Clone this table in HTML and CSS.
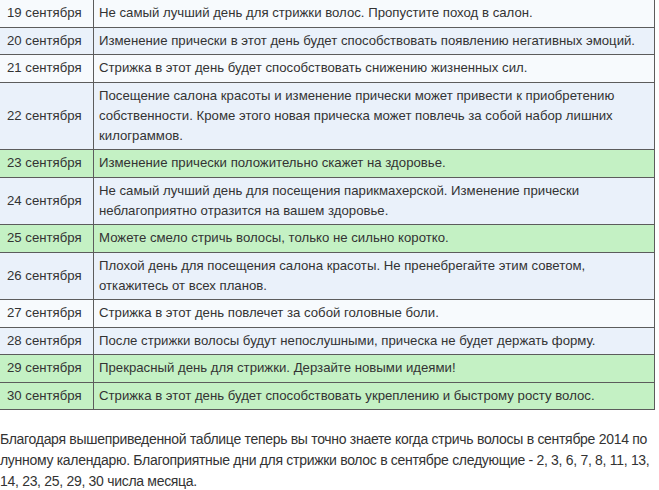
FILE: index.html
```html
<!DOCTYPE html>
<html lang="ru">
<head>
<meta charset="utf-8">
<title>Стрижка волос в сентябре</title>
<link rel="stylesheet" href="styles.css">
</head>
<body>
<div class="page">
<table class="moon">
<colgroup><col class="c-date"><col class="c-text"></colgroup>
<tbody>
<tr class="w"><td>19 сентября</td><td>Не самый лучший день для стрижки волос. Пропустите поход в салон.</td></tr>
<tr class="b"><td>20 сентября</td><td>Изменение прически в этот день будет способствовать появлению негативных эмоций.</td></tr>
<tr class="w"><td>21 сентября</td><td>Стрижка в этот день будет способствовать снижению жизненных сил.</td></tr>
<tr class="b"><td>22 сентября</td><td>Посещение салона красоты и изменение прически может привести к приобретению собственности. Кроме этого новая прическа может повлечь за собой набор лишних килограммов.</td></tr>
<tr class="g"><td>23 сентября</td><td>Изменение прически положительно скажет на здоровье.</td></tr>
<tr class="b"><td>24 сентября</td><td>Не самый лучший день для посещения парикмахерской. Изменение прически неблагоприятно отразится на вашем здоровье.</td></tr>
<tr class="g"><td>25 сентября</td><td>Можете смело стричь волосы, только не сильно коротко.</td></tr>
<tr class="b"><td>26 сентября</td><td>Плохой день для посещения салона красоты. Не пренебрегайте этим советом, откажитесь от всех планов.</td></tr>
<tr class="w"><td>27 сентября</td><td>Стрижка в этот день повлечет за собой головные боли.</td></tr>
<tr class="b"><td>28 сентября</td><td>После стрижки волосы будут непослушными, прическа не будет держать форму.</td></tr>
<tr class="g"><td>29 сентября</td><td>Прекрасный день для стрижки. Дерзайте новыми идеями!</td></tr>
<tr class="g"><td>30 сентября</td><td>Стрижка в этот день будет способствовать укреплению и быстрому росту волос.</td></tr>
</tbody>
</table>
<p class="note">Благодаря вышеприведенной таблице теперь вы точно знаете когда стричь волосы в сентябре 2014 по лунному календарю. Благоприятные дни для стрижки волос в сентябре следующие - 2, 3, 6, 7, 8, 11, 13, 14, 23, 25, 29, 30 числа месяца.</p>
</div>
</body>
</html>
```
FILE: styles.css
```css
html, body {
  margin: 0;
  padding: 0;
  background: #ffffff;
}
.page {
  width: 659px;
  overflow: hidden;
  font-family: "Liberation Sans", Arial, sans-serif;
  color: #333333;
}
.moon {
  border-collapse: collapse;
  table-layout: fixed;
  width: 657px;
  margin: -1px 0 0 -2px;
  font-size: 13.2px;
  line-height: 20px;
}
.c-date { width: 95px; }
.moon td {
  border: 1px solid #5c5c5c;
  padding: 3.25px 5px;
  vertical-align: middle;
}
.moon td:first-child {
  padding-left: 8px;
  padding-right: 4px;
  white-space: nowrap;
}
.moon tr.w td { background: #f7fafd; }
.moon tr.b td { background: #eaf1fa; }
.moon tr.g td { background: #c4f1c4; }
.note {
  margin: 19px 0 0 0;
  font-size: 14px;
  letter-spacing: -0.3px;
  line-height: 21px;
  color: #333333;
}
```
